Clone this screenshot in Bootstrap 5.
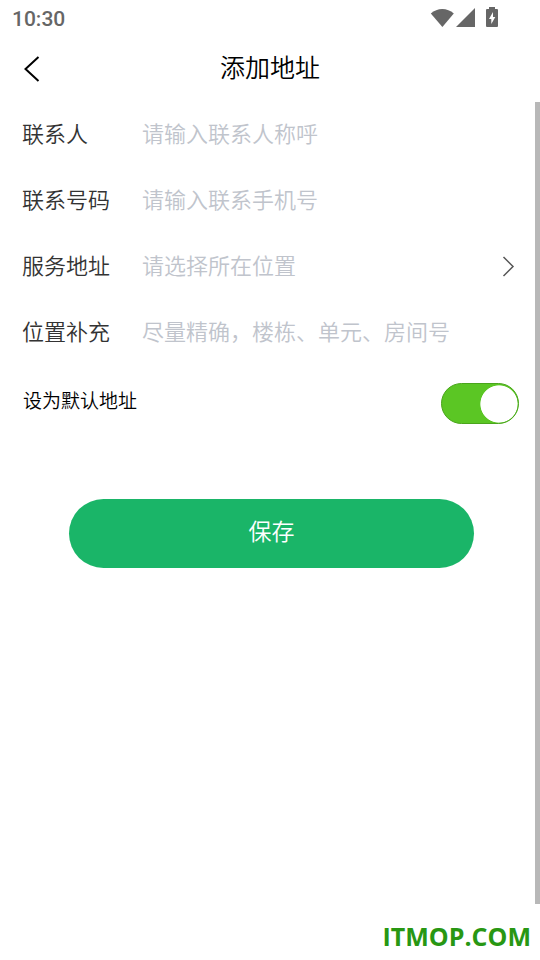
<!DOCTYPE html>
<html lang="zh-CN">
<head>
<meta charset="utf-8">
<meta name="viewport" content="width=device-width, initial-scale=1">
<title>添加地址</title>
<link href="https://cdn.jsdelivr.net/npm/bootstrap@5.3.0/dist/css/bootstrap.min.css" rel="stylesheet">
<style>
  body { font-family: "Noto Sans CJK SC", sans-serif; font-weight: 350; color: #000; background: #fff; }
  .status-bar { height: 36px; padding: 2px 42px 0 12px; color: #666; font: 500 21px/34px Roboto, sans-serif; }
  .status-bar svg { margin-bottom: 2px; }
  .title-bar { height: 66px; padding: 0 20px; }
  .title-bar h1 { font-size: 25px; line-height: 36px; font-weight: 350; padding-bottom: 6px; }
  .side { width: 24px; height: 30px; }
  .form-area { border-right: 5px solid #b8b8b8; }
  .field { height: 66px; padding: 0 20px 6px 22px; font-size: 22px; line-height: 34px; }
  .field-name { width: 120px; color: #333; }
  .field .form-control { font-size: 22px; line-height: 34px; font-weight: 350; color: #333; }
  .field .form-control::placeholder, .hint { color: #c0c4cc; opacity: 1; }
  .default-row { height: 75px; padding: 0 16px 0 23px; }
  .default-row label { font-size: 19px; line-height: 28px; padding-bottom: 8px; }
  .default-row .form-check-input {
    width: 78px; height: 41px; margin: 0; border-color: #4aa51c; background-color: #5bc624;
    background-image: radial-gradient(circle closest-side, #fff 96%, transparent 100%);
    background-size: 38px 38px; background-repeat: no-repeat; background-position: left center;
  }
  .default-row .form-check-input:checked {
    border-color: #4aa51c; background-color: #5bc624; background-position: right center;
    background-image: radial-gradient(circle closest-side, #fff 96%, transparent 100%);
  }
  .save-area { padding: 58px 61px 0 69px; }
  .btn-save { height: 69px; font-size: 23px; line-height: 34px; font-weight: 350; padding: 0 0 8px; }
  .btn-save, .btn-save:hover, .btn-save:active { background: #1ab568; color: #fff; }
  .brand { height: 56px; padding: 0 9px; font: 700 25px/64px "Open Sans", sans-serif; color: #289713; }
</style>
<script src="https://cdn.jsdelivr.net/npm/bootstrap@5.3.0/dist/js/bootstrap.bundle.min.js"></script>
</head>
<body class="d-flex flex-column min-vh-100">
  <div class="status-bar d-flex justify-content-between align-items-center">
    <span>10:30</span>
    <svg width="68" height="22" viewBox="0 0 68 22" fill="#666" aria-hidden="true">
      <path d="M.8 6.4C7.3.4 17.3.4 23.8 6.4L12.4 20z"/>
      <path d="M26 20 45 1v19z"/>
      <path fill-rule="evenodd" d="M59 0h6v2h2q1 0 1 1v16q0 1-1 1H57q-1 0-1-1V3q0-1 1-1h2zM63 5l-4 7h2.300v5l4-7H63z"/>
    </svg>
  </div>
  <header class="title-bar d-flex align-items-center justify-content-between">
    <button type="button" class="btn p-0 border-0 d-flex side" aria-label="返回">
      <svg width="24" height="30" viewBox="0 0 24 30" fill="none" stroke="#000" stroke-width="2"><path d="M18.500 3 5.500 15l13 12"/></svg>
    </button>
    <h1 class="m-0">添加地址</h1>
    <span class="side"></span>
  </header>
  <form class="form-area flex-grow-1">
    <div class="field d-flex align-items-center">
      <label class="field-name flex-shrink-0" for="person">联系人</label>
      <input class="form-control border-0 p-0 bg-transparent" id="person" type="text" placeholder="请输入联系人称呼">
    </div>
    <div class="field d-flex align-items-center">
      <label class="field-name flex-shrink-0" for="phone">联系号码</label>
      <input class="form-control border-0 p-0 bg-transparent" id="phone" type="tel" placeholder="请输入联系手机号">
    </div>
    <div class="field d-flex align-items-center">
      <label class="field-name flex-shrink-0" for="place">服务地址</label>
      <button class="form-control border-0 p-0 bg-transparent d-flex align-items-center justify-content-between" id="place" type="button">
        <span class="hint">请选择所在位置</span>
        <svg width="14" height="26" viewBox="0 0 14 26" fill="none" stroke="#555" stroke-width="1.500" aria-hidden="true"><path d="M2.500 6l9.500 9.500-9.500 9.500"/></svg>
      </button>
    </div>
    <div class="field d-flex align-items-center">
      <label class="field-name flex-shrink-0" for="detail">位置补充</label>
      <input class="form-control border-0 p-0 bg-transparent" id="detail" type="text" placeholder="尽量精确，楼栋、单元、房间号">
    </div>
    <div class="default-row form-switch d-flex align-items-center justify-content-between">
      <label for="is-default">设为默认地址</label>
      <input class="form-check-input" id="is-default" type="checkbox" role="switch" checked>
    </div>
    <div class="save-area">
      <button type="button" class="btn btn-save w-100 border-0 rounded-pill">保存</button>
    </div>
  </form>
  <footer class="brand text-end">ITMOP.COM</footer>
</body>
</html>
